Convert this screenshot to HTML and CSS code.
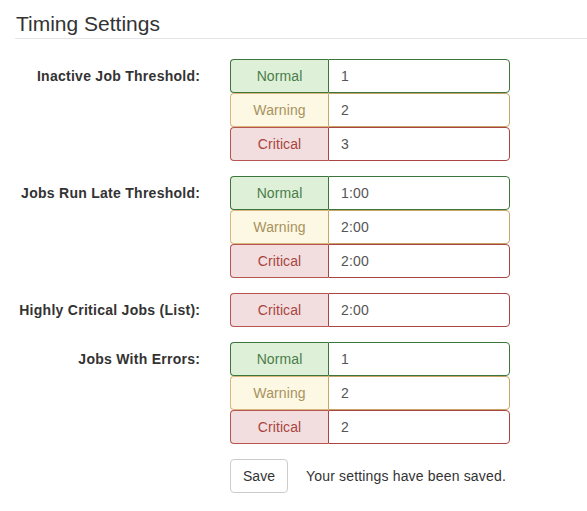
FILE: index.html
```html
<!DOCTYPE html>
<html>
<head>
<meta charset="utf-8">
<link rel="stylesheet" href="styles.css">
</head>
<body>
<div class="page">
  <h3 class="title">Timing Settings</h3>
  <form class="form">
    <div class="form-group">
      <label class="control-label">Inactive Job Threshold:</label>
      <div class="groups">
        <div class="input-group success"><span class="addon">Normal</span><input class="control" type="text" value="1"></div>
        <div class="input-group warning"><span class="addon">Warning</span><input class="control" type="text" value="2"></div>
        <div class="input-group error"><span class="addon">Critical</span><input class="control" type="text" value="3"></div>
      </div>
    </div>
    <div class="form-group">
      <label class="control-label">Jobs Run Late Threshold:</label>
      <div class="groups">
        <div class="input-group success"><span class="addon">Normal</span><input class="control" type="text" value="1:00"></div>
        <div class="input-group warning"><span class="addon">Warning</span><input class="control" type="text" value="2:00"></div>
        <div class="input-group error"><span class="addon">Critical</span><input class="control" type="text" value="2:00"></div>
      </div>
    </div>
    <div class="form-group">
      <label class="control-label">Highly Critical Jobs (List):</label>
      <div class="groups">
        <div class="input-group error"><span class="addon">Critical</span><input class="control" type="text" value="2:00"></div>
      </div>
    </div>
    <div class="form-group">
      <label class="control-label">Jobs With Errors:</label>
      <div class="groups">
        <div class="input-group success"><span class="addon">Normal</span><input class="control" type="text" value="1"></div>
        <div class="input-group warning"><span class="addon">Warning</span><input class="control" type="text" value="2"></div>
        <div class="input-group error"><span class="addon">Critical</span><input class="control" type="text" value="2"></div>
      </div>
    </div>
    <div class="form-group">
      <span class="control-label"></span>
      <div class="actions">
        <button type="button" class="btn">Save</button>
        <span class="status">Your settings have been saved.</span>
      </div>
    </div>
  </form>
</div>
</body>
</html>
```
FILE: styles.css
```css
* { box-sizing: border-box; }
html, body { margin: 0; padding: 0; background: #fff; }
body {
  font-family: "Liberation Sans", Arial, sans-serif;
  font-size: 14px;
  line-height: 20px;
  color: #333;
}
.page { padding: 12px 0 0 15px; }
.title {
  margin: 0 0 20px 0;
  font-size: 21px;
  font-weight: normal;
  line-height: 23px;
  padding: 0 0 3px 1px;
  border-bottom: 1px solid #e5e5e5;
}
.form { display: flex; flex-direction: column; gap: 15px; }
.form-group {
  display: grid;
  grid-template-columns: 185px 280px;
  column-gap: 30px;
  align-items: start;
}
.control-label {
  text-align: right;
  font-weight: bold;
  padding-top: 7px;
  line-height: 20px;
  letter-spacing: 0.27px;
  margin-right: -0.27px;
}
.groups { display: flex; flex-direction: column; }
.input-group { display: flex; height: 34px; }
.addon {
  width: 98px;
  border: 1px solid;
  border-right: 0;
  border-radius: 4px 0 0 4px;
  display: flex;
  align-items: center;
  justify-content: center;
  letter-spacing: 0.1px;
}
.control {
  flex: 1;
  min-width: 0;
  height: 34px;
  margin: 0;
  border: 1px solid;
  border-radius: 0 4px 4px 0;
  padding: 6px 12px;
  font: inherit;
  color: #555;
  background: #fff;
  outline: none;
  letter-spacing: 0.15px;
}
.success .addon { background: #dff0d8; color: #4a7d4a; border-color: #3c763d; }
.success .control { border-color: #3c763d; }
.warning .addon { background: #fcf8e3; color: #a8925e; border-color: #d9b67d; }
.warning .control { border-color: #c9a467; }
.error .addon { background: #f2dede; color: #a94442; border-color: #b75553; }
.error .control { border-color: #a94442; }
.actions { display: flex; align-items: center; gap: 18px; }
.btn {
  width: 58px;
  height: 34px;
  background: #fff;
  border: 1px solid #ccc;
  border-radius: 4px;
  font: inherit;
  color: #333;
  padding: 0;
}
.status { color: #333; letter-spacing: 0.17px; }
```
